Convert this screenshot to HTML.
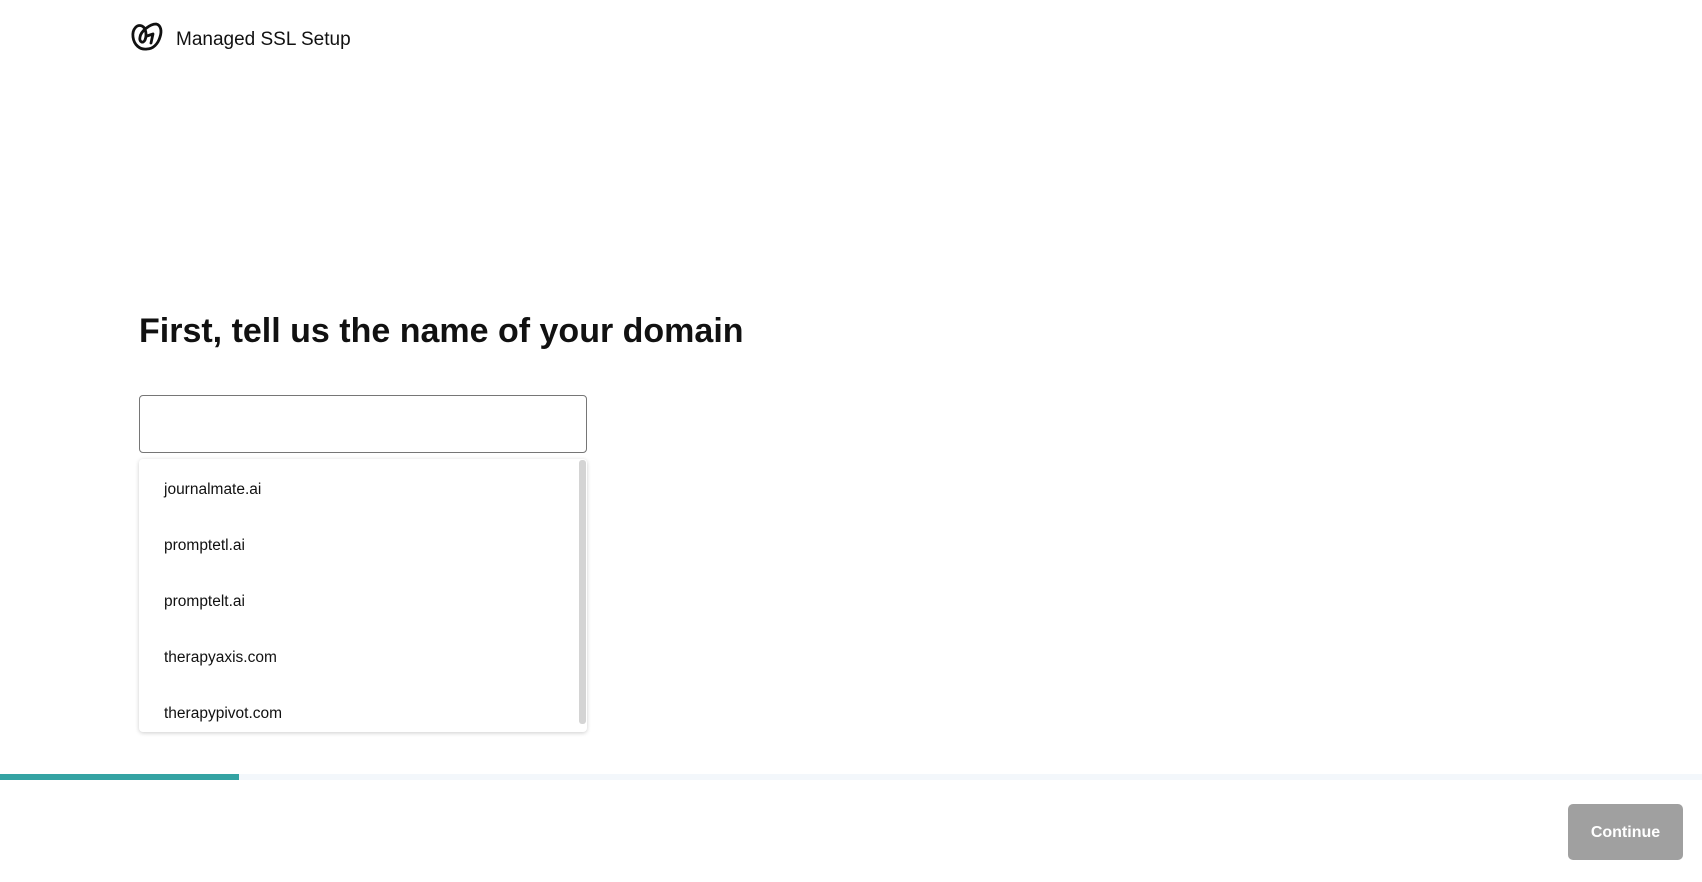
<!DOCTYPE html>
<html><head><style>
body{margin:0;width:1702px;height:882px;background:#fff;font-family:"Liberation Sans",sans-serif;color:#111;position:relative;overflow:hidden}
.a{position:absolute}
</style></head><body>
<svg class="a" style="left:130px;top:21px" width="34" height="32" viewBox="0 0 34 32"><path d="M17 28C10 29 4 24 3 16C2 8 7 3 12 5C16 7 17 14 15 19C13 23 9 21 10 16C11 10 20 3 26 3C31 4 32 10 30 16C28 23 23 28 17 28Z M17 15L23 13L21 22" fill="none" stroke="#111" stroke-width="2.8" stroke-linecap="round" stroke-linejoin="round"/></svg>
<div class="a" style="left:176px;top:29px;font-size:19px;color:#111">Managed SSL Setup</div>
<div class="a" style="left:139px;top:312px;font-size:34px;font-weight:bold;color:#111">First, tell us the name of your domain</div>
<div class="a" style="left:139px;top:395px;width:446px;height:56px;border:1px solid #767676;border-radius:4px"></div>
<div class="a" style="left:139px;top:459px;width:448px;height:273px;border-radius:4px;box-shadow:0 1px 4px rgba(0,0,0,.2);background:#fff;overflow:hidden;font-size:15.5px">
<div class="a" style="left:25px;top:22px">journalmate.ai</div>
<div class="a" style="left:25px;top:78px">promptetl.ai</div>
<div class="a" style="left:25px;top:134px">promptelt.ai</div>
<div class="a" style="left:25px;top:190px">therapyaxis.com</div>
<div class="a" style="left:25px;top:246px">therapypivot.com</div>
<div class="a" style="left:440px;top:1px;width:7px;height:264px;background:#d4d4d4;border-radius:3px"></div>
</div>
<div class="a" style="left:0;top:774px;width:1702px;height:6px;background:#f3f7fb"></div>
<div class="a" style="left:0;top:774px;width:239px;height:6px;background:#34a3a3"></div>
<div class="a" style="left:1568px;top:804px;width:115px;height:56px;background:#a0a0a0;border-radius:5px;color:#fff;font-size:16px;font-weight:bold;text-align:center;line-height:58px">Continue</div>
</body></html>
